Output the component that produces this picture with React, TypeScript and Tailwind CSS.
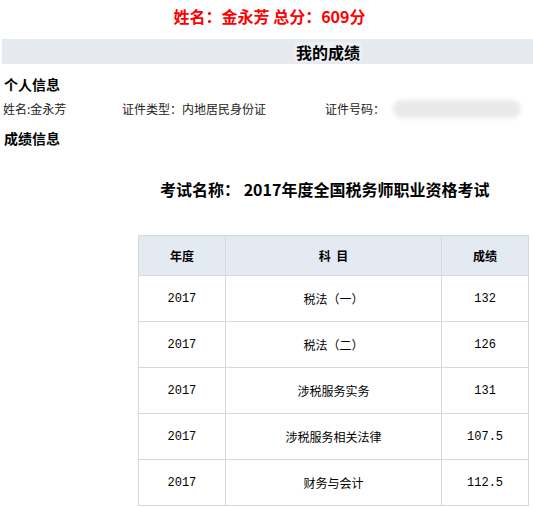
const rows = [
  { year: "2017", subject: "税法（一）", score: "132" },
  { year: "2017", subject: "税法（二）", score: "126" },
  { year: "2017", subject: "涉税服务实务", score: "131" },
  { year: "2017", subject: "涉税服务相关法律", score: "107.5" },
  { year: "2017", subject: "财务与会计", score: "112.5" },
];

const cjk = "font-['Noto_Sans_CJK_SC','Noto_Sans',sans-serif]";
const num = "font-['Liberation_Mono','DejaVu_Sans_Mono',monospace]";

export default function App() {
  return (
    <div className={`w-[533px] h-[507px] bg-white text-black overflow-hidden ${cjk}`}>
      {/* total score */}
      <div className="h-[39px] pt-[5px] flex justify-center">
        <span className="text-[16px] leading-[22px] font-bold text-[#ff0000] pl-[6px]">
          姓名：金永芳 总分：609分
        </span>
      </div>

      {/* title bar */}
      <div className="ml-[2px] h-[25px] bg-[#e6eaef] flex items-center pl-[292px]">
        <span className="text-[16px] leading-[20px] font-bold px-[2px] bg-[#edf0f3]">我的成绩</span>
      </div>

      <div className="pl-[4px] mt-[9px] h-[22px] flex items-center">
        <span className="text-[14px] font-bold">个人信息</span>
      </div>

      <div className="pl-[3px] mt-[1px] h-[26px] flex items-center text-[12px] text-[#222]">
        <span className="w-[119px]">姓名:金永芳</span>
        <span className="w-[203px]">证件类型：内地居民身份证</span>
        <span>证件号码：</span>
        <span className="ml-[8px] w-[128px] h-[18px] rounded-full bg-[#e9e9e9] blur-[2px]" />
      </div>

      <div className="pl-[4px] mt-[4px] h-[24px] flex items-center">
        <span className="text-[14px] font-bold">成绩信息</span>
      </div>

      <div className="mt-[26px] h-[26px] flex items-center pl-[160px]">
        <span className="text-[16px] font-bold">考试名称： 2017年度全国税务师职业资格考试</span>
      </div>

      <div className="mt-[33px] pl-[138px]">
        <table className="border-collapse w-[391px] text-[12px] border border-[#d8d8d8]">
          <thead>
            <tr className="h-[40px] bg-[#e4eaf1]">
              <th className="w-[87px] border border-[#d8d8d8] font-bold">年度</th>
              <th className="w-[217px] border border-[#d8d8d8] font-bold">科&nbsp;&nbsp;目</th>
              <th className="w-[87px] border border-[#d8d8d8] font-bold">成绩</th>
            </tr>
          </thead>
          <tbody>
            {rows.map((r, i) => (
              <tr key={i} className="h-[46px]">
                <td className={`border border-[#d8d8d8] text-center text-[12px] ${num}`}>{r.year}</td>
                <td className="border border-[#d8d8d8] text-center">{r.subject}</td>
                <td className={`border border-[#d8d8d8] text-center text-[12px] ${num}`}>{r.score}</td>
              </tr>
            ))}
          </tbody>
        </table>
      </div>
    </div>
  );
}
